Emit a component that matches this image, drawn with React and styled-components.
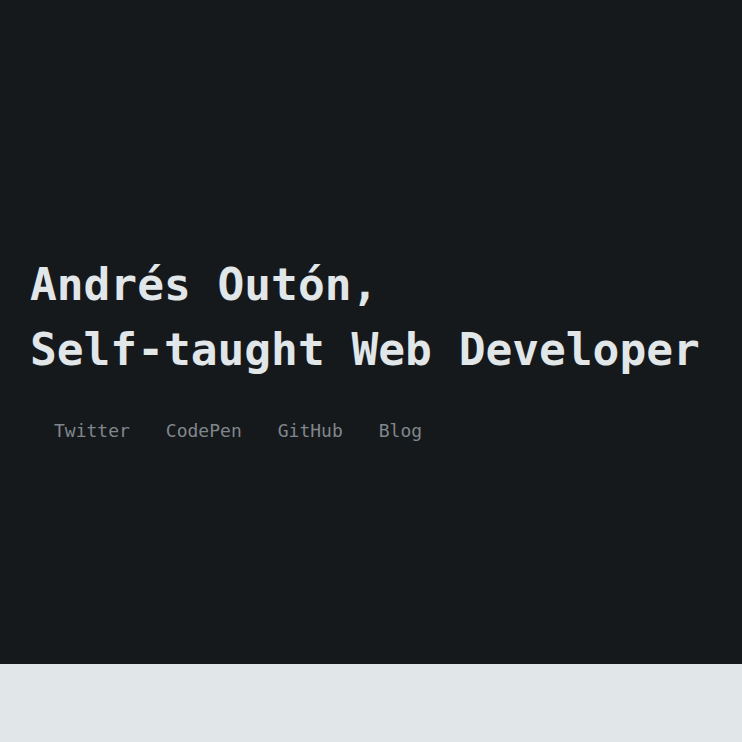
import React from "react";
import styled, { createGlobalStyle } from "styled-components";

const GlobalStyle = createGlobalStyle`
  html, body {
    margin: 0;
    padding: 0;
    background: #e1e6e9;
  }
  body {
    font-family: "DejaVu Sans Mono", "Liberation Mono", monospace;
  }
`;

const Hero = styled.header`
  height: 664px;
  background: #16191c;
  display: flex;
  flex-direction: column;
  justify-content: center;
  padding: 28px 30px 0;
  box-sizing: border-box;
`;

const Title = styled.h1`
  margin: 0;
  font-size: 44.5px;
  line-height: 65px;
  font-weight: 700;
  color: #e1e6e9;
  letter-spacing: 0;
`;

const Links = styled.nav`
  display: flex;
  gap: 36px;
  margin-top: 38px;
  padding-left: 24px;
`;

const LinkItem = styled.a`
  font-size: 18px;
  color: #80868c;
  text-decoration: none;
`;

const Footer = styled.section`
  height: 78px;
  background: #e1e6e9;
`;

const links = ["Twitter", "CodePen", "GitHub", "Blog"];

export default function App() {
  return (
    <>
      <GlobalStyle />
      <Hero>
        <Title>
          Andrés Outón,
          <br />
          Self-taught Web Developer
        </Title>
        <Links>
          {links.map((l) => (
            <LinkItem key={l} href="#">
              {l}
            </LinkItem>
          ))}
        </Links>
      </Hero>
      <Footer />
    </>
  );
}
